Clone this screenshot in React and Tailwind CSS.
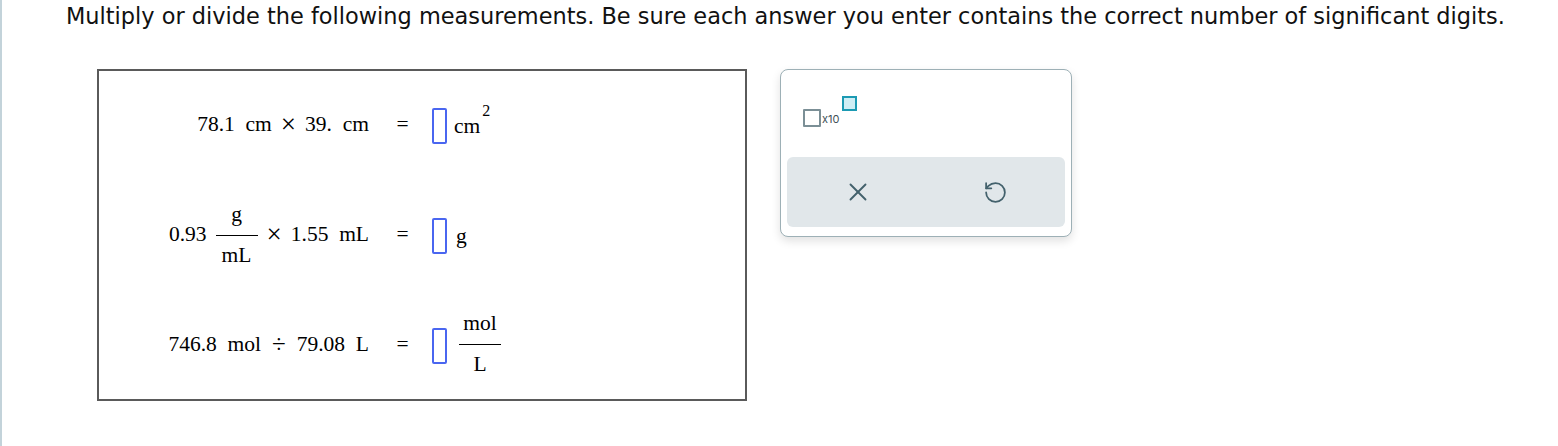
import { X, RotateCcw } from 'lucide-react';

function AnswerBox() {
  return <span className="inline-block w-[15px] h-[36px] border-2 border-[#4a66f0] rounded-[2px] bg-white" />;
}

function Frac({ num, den, width = 'w-[42px]' }) {
  return (
    <span className={`inline-flex flex-col items-center ${width} leading-none -translate-y-[5px]`}>
      <span className="pb-[9px]">{num}</span>
      <span className="block w-full h-px bg-black" />
      <span className="pt-[9px]">{den}</span>
    </span>
  );
}

function Times() {
  return <span className="text-[27px] leading-none mx-[9px]">×</span>;
}

function Row({ left, right }) {
  return (
    <div className="grid grid-cols-[272px_61px_1fr] items-center h-[110px] -translate-y-[2px]">
      <div className="flex justify-end items-center">{left}</div>
      <div className="text-center pl-[2px]">=</div>
      <div className="flex items-center translate-y-[2px]">{right}</div>
    </div>
  );
}

export default function App() {
  return (
    <div className="min-h-[446px] w-[1558px] bg-white border-l-2 border-[#c3d3da] relative">
      <p className="pl-[64px] pt-[2px] text-[22.45px] leading-[28px] text-[#111] font-['DejaVu_Sans',sans-serif]">
        Multiply or divide the following measurements. Be sure each answer you enter contains the correct number of significant digits.
      </p>

      <div className="flex items-start mt-[39px] pl-[95px]">
        <div className="w-[650px] h-[332px] border-2 border-[#5a5a5a] font-['Liberation_Serif',serif] text-[21.5px] text-black">
          <Row
            left={
              <span className="flex items-center whitespace-pre pr-[2px]">
                78.1  cm<Times />39.  cm
              </span>
            }
            right={
              <>
                <AnswerBox />
                <span className="ml-[7px]">cm</span>
                <span className="relative -top-[15px] ml-[2px] text-[16px]">2</span>
              </>
            }
          />
          <Row
            left={
              <span className="flex items-center whitespace-pre pr-[2px]">
                <span className="mr-[9px]">0.93</span>
                <span className="translate-y-[3px]">
                  <Frac num="g" den="mL" width="w-[42px]" />
                </span>
                <Times />
                <span>1.55  mL</span>
              </span>
            }
            right={
              <>
                <AnswerBox />
                <span className="ml-[9px]">g</span>
              </>
            }
          />
          <Row
            left={
              <span className="flex items-center whitespace-pre pr-[2px]">
                746.8  mol<span className="text-[25px] leading-none mx-[11px]">÷</span>79.08  L
              </span>
            }
            right={
              <>
                <AnswerBox />
                <span className="ml-[12px]">
                  <Frac num="mol" den="L" width="w-[42px]" />
                </span>
              </>
            }
          />
        </div>

        <div className="ml-[33px] w-[292px] h-[168px] rounded-[8px] border border-[#9db0b6] bg-white shadow-[0_4px_10px_rgba(0,0,0,0.12)] px-[6px] pt-[26px]">
          <div className="flex items-end h-[34px] pl-[16px] pb-[3px]">
            <span className="w-[18px] h-[18px] border-2 border-[#7b8f96] rounded-[1px]" />
            <span className="relative text-[11px] leading-none text-[#3f5258] font-['Inter',sans-serif] ml-[1px] mb-[2px]">
              x10
              <span className="absolute -top-[18px] left-[20px] w-[15px] h-[15px] border-2 border-[#1c9ab3] bg-[#cfeef5]" />
            </span>
          </div>
          <div className="mt-[27px] h-[70px] rounded-[6px] bg-[#e1e7ea] flex items-center">
            <div className="w-1/2 flex justify-center pl-[2px]">
              <X size={30} strokeWidth={1.5} className="text-[#43616c]" />
            </div>
            <div className="w-1/2 flex justify-center">
              <RotateCcw size={25} strokeWidth={1.7} className="text-[#43616c]" />
            </div>
          </div>
        </div>
      </div>
    </div>
  );
}
